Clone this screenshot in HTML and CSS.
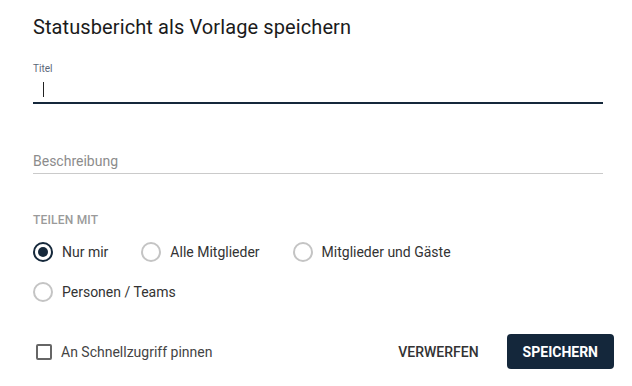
FILE: index.html
```html
<!DOCTYPE html>
<html lang="de">
<head>
<meta charset="utf-8">
<title>Statusbericht als Vorlage speichern</title>
<link rel="stylesheet" href="styles.css">
</head>
<body>
<div class="dialog">
  <h1 class="title">Statusbericht als Vorlage speichern</h1>
  <div class="fields">
    <div class="field field-active">
      <div class="field-label">Titel</div>
      <div class="field-input"><span class="caret"></span></div>
    </div>
    <div class="field field-plain">
      <div class="placeholder">Beschreibung</div>
    </div>
    <div class="section-label">TEILEN MIT</div>
    <div class="radios">
      <label class="radio radio-checked"><span class="radio-circle"></span><span class="radio-text">Nur mir</span></label>
      <label class="radio"><span class="radio-circle"></span><span class="radio-text">Alle Mitglieder</span></label>
      <label class="radio"><span class="radio-circle"></span><span class="radio-text">Mitglieder und Gäste</span></label>
      <label class="radio"><span class="radio-circle"></span><span class="radio-text">Personen / Teams</span></label>
    </div>
  </div>
  <div class="footer">
    <label class="check"><span class="check-box"></span><span class="check-text">An Schnellzugriff pinnen</span></label>
    <div class="actions">
      <button class="btn btn-text">VERWERFEN</button>
      <button class="btn btn-primary">SPEICHERN</button>
    </div>
  </div>
</div>
</body>
</html>
```
FILE: styles.css
```css
* { box-sizing: border-box; }
html, body { margin: 0; padding: 0; background: #fff; }
body { font-family: Roboto, "Liberation Sans", Arial, sans-serif; color: #222; }

.dialog { padding: 15px 18px 0 33px; }

.title {
  margin: 0;
  font-size: 20px;
  line-height: 24px;
  font-weight: 400;
  letter-spacing: 0.1px;
  color: #1b1b1b;
}

.fields { padding-right: 11px; }

.field-active { margin-top: 24px; }
.field-label {
  font-size: 10px;
  line-height: 12px;
  color: #5b6877;
}
.field-input {
  height: 29px;
  border-bottom: 2px solid #15283b;
  padding: 7px 0 0 10px;
}
.caret {
  display: block;
  width: 1px;
  height: 15px;
  background: #222;
}

.field-plain {
  margin-top: 49px;
  border-bottom: 1px solid #cacaca;
  padding-bottom: 4px;
}
.placeholder {
  font-size: 14px;
  line-height: 16px;
  color: #8c8c8c;
}

.section-label {
  margin-top: 39px;
  font-size: 12px;
  line-height: 14px;
  font-weight: 500;
  color: #9a9a9a;
  letter-spacing: 0.2px;
}

.radios {
  margin-top: 5px;
  display: flex;
  flex-wrap: wrap;
  column-gap: 33px;
}
.radio {
  height: 40px;
  display: flex;
  align-items: center;
  gap: 9px;
  font-size: 14px;
  color: #333;
}
.radio-circle {
  width: 20px;
  height: 20px;
  border-radius: 50%;
  border: 2px solid #c4c4c4;
  flex: none;
  position: relative;
}
.radio-checked .radio-circle { border-color: #15283b; }
.radio-checked .radio-circle::after {
  content: "";
  position: absolute;
  left: 3px;
  top: 3px;
  width: 10px;
  height: 10px;
  border-radius: 50%;
  background: #15283b;
}

.footer {
  margin-top: 22px;
  display: flex;
  align-items: center;
  justify-content: space-between;
}
.check {
  display: flex;
  align-items: center;
  gap: 9px;
  margin-left: 3px;
  font-size: 14px;
  color: #444;
}
.check-box {
  width: 16px;
  height: 16px;
  border: 2px solid #666;
  border-radius: 2px;
}
.actions { display: flex; align-items: center; gap: 11px; }
.btn {
  height: 35px;
  padding: 0 16px;
  border: none;
  border-radius: 4px;
  font-family: inherit;
  font-size: 14px;
  background: transparent;
}
.btn-text { font-weight: 500; color: #333; padding: 0 17px 0 16px; }
.btn-primary { font-weight: 700; color: #fff; background: #14273b; }
```
